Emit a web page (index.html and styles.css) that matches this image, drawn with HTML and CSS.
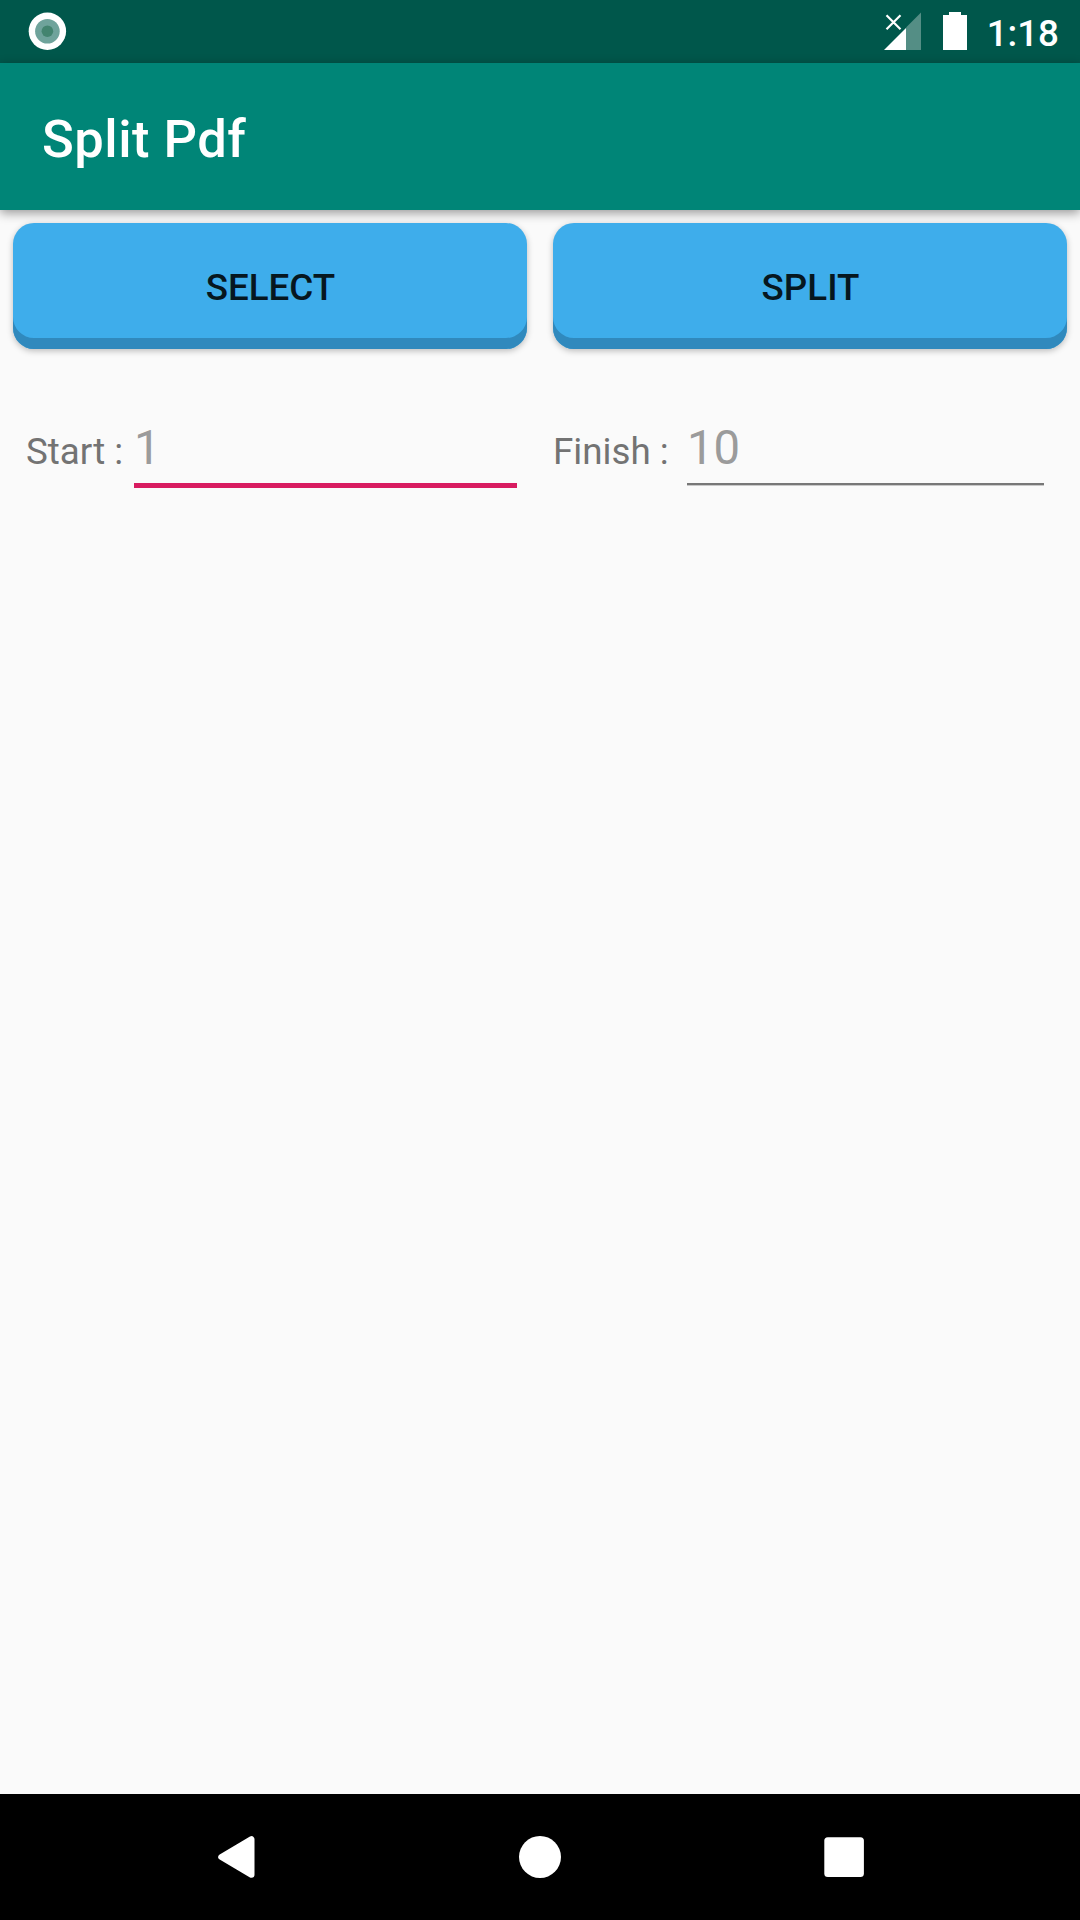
FILE: index.html
```html
<!DOCTYPE html>
<html lang="en">
<head>
    <meta charset="UTF-8">
    <meta name="viewport" content="width=device-width, initial-scale=1.0">
    <title>Split Pdf</title>
    <link rel="stylesheet" href="styles.css">
</head>
<body>

    <!-- System status bar -->
    <div class="status-bar">
        <svg class="record-icon" width="39" height="38" viewBox="0 0 39 38">
            <circle cx="19.4" cy="19.2" r="18.7" fill="#fff"/>
            <circle cx="19.4" cy="19.2" r="12.3" fill="#6fa39b"/>
            <circle cx="19.4" cy="19.2" r="5.8" fill="#43846f"/>
        </svg>
        <div class="status-right">
            <svg class="signal-icon" width="37" height="38" viewBox="0 0 37 38">
                <path d="M37 0.5V38H22V15.5z" fill="#548e85"/>
                <path d="M22 16V38H0z" fill="#fff"/>
                <path d="M2.5 3.2l14 14M16.5 3.2l-14 14" stroke="#fff" stroke-width="2.2"/>
            </svg>
            <svg class="battery-icon" width="24" height="38" viewBox="0 0 24 38">
                <path d="M6 0h12v3h6v35H0V3h6z" fill="#fff"/>
            </svg>
            <span class="clock">1:18</span>
        </div>
    </div>

    <header class="app-bar">
        <h1>Split Pdf</h1>
    </header>

    <main>
        <div class="buttons">
            <button class="btn">SELECT</button>
            <button class="btn">SPLIT</button>
        </div>

        <!-- Page range -->
        <div class="range">
            <div class="field start">
                <label for="start">Start :</label>
                <input id="start" class="active" type="text" placeholder="1">
            </div>
            <div class="field finish">
                <label for="finish">Finish :</label>
                <input id="finish" type="text" placeholder="10">
            </div>
        </div>
    </main>

    <!-- Navigation buttons -->
    <nav class="nav-bar">
        <svg width="42" height="42" viewBox="0 0 42 42">
            <path d="M6.2 21L36.5 3.2V38.8z" fill="#fff" stroke="#fff" stroke-width="6" stroke-linejoin="round"/>
        </svg>
        <svg width="42" height="42" viewBox="0 0 42 42">
            <circle cx="21" cy="21" r="21" fill="#fff"/>
        </svg>
        <svg width="42" height="42" viewBox="0 0 42 42">
            <rect x="1.3" y="1.3" width="39.6" height="39.6" rx="3.5" fill="#fff"/>
        </svg>
    </nav>

</body>
</html>
```

FILE: styles.css
```css
* {
    box-sizing: border-box;
}

body {
    margin: 0;
    height: 1920px;
    display: flex;
    flex-direction: column;
    background-color: #fafafa;
    font-family: Roboto, sans-serif;
    overflow: hidden;
}

svg {
    display: block;
    flex-shrink: 0;
}

/* Status bar */
.status-bar {
    height: 63px;
    padding: 0 21px 1px 28px;
    display: flex;
    justify-content: space-between;
    align-items: center;
    background-color: #00574b;
}

.status-right {
    display: flex;
    align-items: center;
}

.battery-icon {
    margin: 0 20px 0 22px;
}

.clock {
    font-size: 36.75px;
    line-height: 43px;
    font-weight: 500;
    color: #fff;
    padding-top: 5px;
}

/* App bar */
.app-bar {
    height: 147px;
    padding: 5px 42px 0;
    display: flex;
    align-items: center;
    background-color: #008577;
    box-shadow: 0 3px 10px rgba(0, 0, 0, 0.4);
}

.app-bar h1 {
    margin: 0;
    font-size: 52.5px;
    font-weight: 500;
    letter-spacing: 0.5px;
    color: #fff;
}

main {
    flex: 1;
}

/* Buttons */
.buttons {
    display: flex;
    gap: 26px;
    padding: 13px 13px 0;
}

.btn {
    flex: 1;
    height: 126px;
    padding: 2px 0 0 1px;
    border: none;
    border-radius: 21px;
    background-color: #3eadeb;
    box-shadow: inset 0 -11px 0 #3089bd, 0 2px 6px rgba(0, 0, 0, 0.25);
    font-family: inherit;
    font-size: 36.75px;
    font-weight: 500;
    color: #06171f;
}

/* Start and finish fields */
.range {
    display: flex;
    padding: 66px 36px 0 26px;
}

.field {
    display: flex;
    align-items: baseline;
    color: #737373;
    font-size: 36.75px;
}

.start {
    width: 527px;
}

.finish {
    flex: 1;
    min-width: 0;
}

label {
    width: 108px;
    white-space: nowrap;
}

.finish label {
    width: 134px;
}

.field input {
    flex: 1;
    min-width: 0;
    height: 70px;
    padding: 0 0 3px;
    border: none;
    border-bottom: 2px solid #777;
    box-shadow: 0 1px 0 #c8c8c8;
    background: none;
    font-family: inherit;
    font-size: 47.25px;
    outline: none;
}

.start input {
    margin-right: 36px;
}

.field input.active {
    height: 73px;
    border-bottom: 5px solid #d81b60;
    box-shadow: none;
}

.field input::placeholder {
    color: #9b9b9b;
    opacity: 1;
}

/* Navigation bar */
.nav-bar {
    height: 126px;
    padding: 0 215px;
    display: flex;
    justify-content: space-between;
    align-items: center;
    background-color: #000;
}
```
